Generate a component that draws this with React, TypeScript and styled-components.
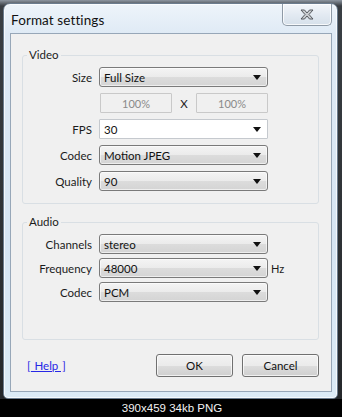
import React from "react";
import styled, { createGlobalStyle } from "styled-components";

const GlobalStyle = createGlobalStyle`
  html, body {
    margin: 0;
    padding: 0;
    background: #111;
  }
  * {
    box-sizing: border-box;
  }
`;

type ComboProps = {
  value: string;
  editable?: boolean;
};

const Combo: React.FC<ComboProps> = ({ value, editable }) => {
  return (
    <ComboBox $editable={editable}>
      <span>{value}</span>
      <svg width="8" height="5" viewBox="0 0 8 5">
        <path d="M0 0 H8 L4 5 Z" fill="#111" />
      </svg>
    </ComboBox>
  );
};

const App: React.FC = () => {
  return (
    <Page>
      <GlobalStyle />
      <Stage>
        <Window>
          <TitleBar>
            <Title>Format settings</Title>
            <CloseButton>
              <svg width="14" height="11" viewBox="0 0 14 11">
                <path
                  d="M1 1 H4.5 L7 4 L9.5 1 H13 L9 5.5 L13 10 H9.5 L7 7 L4.5 10 H1 L5 5.5 Z"
                  fill="#c9ccd0"
                  stroke="#55595e"
                  strokeWidth="1"
                  strokeLinejoin="round"
                />
              </svg>
            </CloseButton>
          </TitleBar>
          <Client>
            <Group $pb={12}>
              <Legend>Video</Legend>
              <FieldGrid $gap={6}>
                <Label>Size</Label>
                <Combo value="Full Size" />
                <span />
                <span />
                <PercentRow>
                  <PercentField>100%</PercentField>
                  <Times>X</Times>
                  <PercentField>100%</PercentField>
                </PercentRow>
                <span />
                <Label>FPS</Label>
                <Combo value="30" editable />
                <span />
                <Label>Codec</Label>
                <Combo value="Motion JPEG" />
                <span />
                <Label>Quality</Label>
                <Combo value="90" />
                <span />
              </FieldGrid>
            </Group>
            <Group $pb={37} $mt={11}>
              <Legend>Audio</Legend>
              <FieldGrid $gap={4}>
                <Label>Channels</Label>
                <Combo value="stereo" />
                <span />
                <Label>Frequency</Label>
                <Combo value="48000" />
                <Unit>Hz</Unit>
                <Label>Codec</Label>
                <Combo value="PCM" />
                <span />
              </FieldGrid>
            </Group>
            <Footer>
              <HelpLink href="#">[ Help ]</HelpLink>
              <Buttons>
                <DialogButton>OK</DialogButton>
                <DialogButton>Cancel</DialogButton>
              </Buttons>
            </Footer>
          </Client>
        </Window>
      </Stage>
      <Caption>390x459 34kb PNG</Caption>
    </Page>
  );
};

const Page = styled.div`
  width: 342px;
  height: 417px;
  display: flex;
  flex-direction: column;
  background: #1c1c1c;
  overflow: hidden;
`;

const Stage = styled.div`
  height: 399px;
  padding: 3px 4px 0 3px;
  background: linear-gradient(180deg, #8d96a0 0, #3a3f44 6px, #25282b 100%);
`;

const Window = styled.div`
  height: 396px;
  display: flex;
  flex-direction: column;
  border: 1px solid #6b7c8e;
  border-radius: 7px 7px 5px 5px;
  background: linear-gradient(
    180deg,
    #eef4fa 0,
    #dfeaf5 30px,
    #d6e5f3 60%,
    #dcebf6 100%
  );
  box-shadow: inset 0 0 0 1px rgba(255, 255, 255, 0.7);
`;

const TitleBar = styled.div`
  height: 29px;
  display: flex;
  align-items: flex-start;
  justify-content: space-between;
  padding: 0 5px 0 7px;
`;

const Title = styled.div`
  margin-top: 8px;
  font-family: Lato, "Open Sans", sans-serif;
  font-size: 13.5px;
  color: #111;
  letter-spacing: 0.1px;
`;

const CloseButton = styled.div`
  width: 50px;
  height: 22px;
  display: flex;
  align-items: center;
  justify-content: center;
  border: 1px solid #8f9aa6;
  border-top: none;
  border-radius: 0 0 5px 5px;
  background: linear-gradient(180deg, #f3f6fa 0, #e3eaf2 50%, #d6e0ea 100%);
  box-shadow: inset 0 0 0 1px rgba(255, 255, 255, 0.8);
`;

const Client = styled.div`
  flex: 1;
  margin: 0 5px 6px 6px;
  border: 1px solid #97a7b8;
  background: #f0f0f0;
  padding: 14px 12px 0 11px;
  display: flex;
  flex-direction: column;
  font-family: Lato, "Open Sans", sans-serif;
  font-size: 11px;
  color: #1b1b1b;
`;

const Group = styled.fieldset<{ $pb: number; $mt?: number }>`
  margin: ${({ $mt }) => $mt ?? 0}px 0 0 0;
  padding: 5px 0 ${({ $pb }) => $pb}px 0;
  border: 1px solid #d9dfe4;
  border-radius: 3px;
  min-width: 0;
`;

const Legend = styled.legend`
  margin-left: 4px;
  padding: 0 2px;
  height: 14px;
  line-height: 14px;
  font-size: 11.5px;
  color: #1b1b1b;
`;

const FieldGrid = styled.div<{ $gap: number }>`
  display: grid;
  grid-template-columns: 69px 169px auto;
  grid-auto-rows: 20px;
  column-gap: 7px;
  row-gap: ${({ $gap }) => $gap}px;
  align-items: center;
`;

const Label = styled.span`
  text-align: right;
  font-size: 11.5px;
  color: #1b1b1b;
`;

const ComboBox = styled.div<{ $editable?: boolean }>`
  height: 20px;
  display: flex;
  align-items: center;
  justify-content: space-between;
  padding: 0 6px 0 4px;
  border: 1px solid ${({ $editable }) => ($editable ? "#c5c9ce" : "#7a7a7a")};
  border-radius: ${({ $editable }) => ($editable ? "1px" : "3px")};
  background: ${({ $editable }) =>
    $editable
      ? "#ffffff"
      : "linear-gradient(180deg, #f4f4f4 0, #ebebeb 50%, #dcdcdc 51%, #d4d4d4 100%)"};
  font-size: 11.5px;
  color: #111;
  box-shadow: ${({ $editable }) =>
    $editable ? "none" : "inset 0 0 0 1px rgba(255, 255, 255, 0.6)"};
`;

const PercentRow = styled.div`
  display: flex;
  align-items: center;
  padding-left: 1px;
`;

const PercentField = styled.div`
  width: 72px;
  height: 20px;
  display: flex;
  align-items: center;
  justify-content: center;
  border: 1px solid #c9c9c9;
  border-radius: 1px;
  background: #f0f0f0;
  color: #8a8a8a;
  font-size: 11px;
`;

const Times = styled.span`
  flex: 1;
  text-align: center;
  font-size: 11.5px;
  color: #222;
`;

const Unit = styled.span`
  margin-left: -4px;
  font-size: 11px;
  color: #1b1b1b;
`;

const Footer = styled.div`
  margin-top: 14px;
  display: flex;
  align-items: center;
  justify-content: space-between;
  padding-left: 5px;
`;

const HelpLink = styled.a`
  font-size: 11.5px;
  color: #2727e6;
  text-decoration: underline;
  word-spacing: 1px;
`;

const Buttons = styled.div`
  display: flex;
  gap: 9px;
`;

const DialogButton = styled.button`
  width: 77px;
  height: 23px;
  padding: 0;
  border: 1px solid #707070;
  border-radius: 3px;
  background: linear-gradient(180deg, #f2f2f2 0, #ebebeb 50%, #dddddd 51%, #cfcfcf 100%);
  box-shadow: inset 0 0 0 1px rgba(255, 255, 255, 0.7);
  font-family: Lato, "Open Sans", sans-serif;
  font-size: 11.5px;
  color: #111;
`;

const Caption = styled.div`
  flex: 1;
  display: flex;
  align-items: center;
  justify-content: center;
  background: #000;
  color: #f2f2f2;
  font-family: "Liberation Sans", Arial, sans-serif;
  font-size: 11.5px;
  padding-left: 2px;
`;

export default App;
